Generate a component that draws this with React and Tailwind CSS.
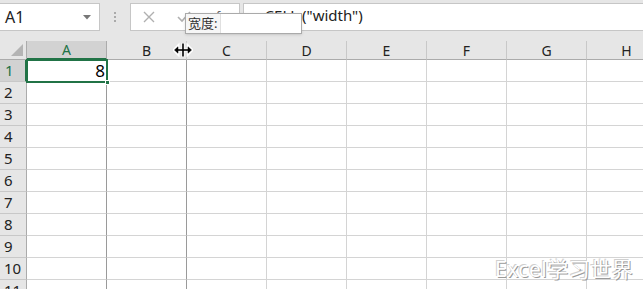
const cols = ["A", "B", "C", "D", "E", "F", "G", "H"];
const rows = [1, 2, 3, 4, 5, 6, 7, 8, 9, 10, 11];

const ResizeCursor = () => (
  <svg width="20" height="16" viewBox="0 0 20 16" className="absolute left-[173px] top-[42px]">
    <g stroke="#fff" strokeWidth="3" fill="#fff">
      <path d="M10 1 V15" />
      <path d="M2 8 H18" />
      <path d="M1 8 L5 4 V12 Z" />
      <path d="M19 8 L15 4 V12 Z" />
    </g>
    <g stroke="#000" strokeWidth="1.6" fill="#000">
      <path d="M10 1.5 V14.5" />
      <path d="M3 8 H17" />
      <path d="M1.5 8 L5 4.8 V11.2 Z" strokeWidth="0.5" />
      <path d="M18.5 8 L15 4.8 V11.2 Z" strokeWidth="0.5" />
    </g>
  </svg>
);

export default function App() {
  return (
    <div
      className="relative w-[643px] h-[289px] overflow-hidden bg-white"
      style={{ fontFamily: '"Noto Sans", "Noto Sans CJK SC", sans-serif' }}
    >
      {/* formula bar */}
      <div className="flex items-start h-[41px] bg-[#e6e6e6] pt-[3px]">
        <div className="flex items-center justify-between w-[100px] h-[28px] bg-white border border-[#c6c6c6] border-l-0 pl-[5px] pr-[8px]">
          <span className="text-[16px] text-[#222]">A1</span>
          <svg width="8" height="5" viewBox="0 0 8 5">
            <path d="M0 0 H8 L4 4.5 Z" fill="#777" />
          </svg>
        </div>
        <div className="w-[30px] h-[28px] flex flex-col items-center justify-center gap-[2px]">
          <span className="w-[2px] h-[2px] bg-[#aaa]" />
          <span className="w-[2px] h-[2px] bg-[#aaa]" />
          <span className="w-[2px] h-[2px] bg-[#aaa]" />
        </div>
        <div className="relative w-[110px] h-[28px] bg-white border border-[#c6c6c6] flex items-center pl-[12px] gap-[22px]">
          <svg width="12" height="12" viewBox="0 0 12 12">
            <path d="M1 1 L11 11 M11 1 L1 11" stroke="#b0b0b0" strokeWidth="1.4" />
          </svg>
          <svg width="14" height="12" viewBox="0 0 14 12">
            <path d="M1 6 L5 10 L13 1" stroke="#b0b0b0" strokeWidth="1.6" fill="none" />
          </svg>
          <span className="text-[13px] italic text-[#666] ml-[2px]">f</span>
        </div>
        <div className="flex-1 h-[28px] ml-[3px] bg-white border border-[#c6c6c6] border-r-0 flex items-center pl-[12px]">
          <span className="text-[15px] text-[#222] -mt-[4px]">=CELL ("width")</span>
        </div>
      </div>

      {/* sheet grid */}
      <div className="grid grid-cols-[27px_repeat(8,80px)] grid-rows-[19px_repeat(11,22px)]">
        <div className="bg-[#e6e6e6] border-b border-r border-[#ababab] flex items-end justify-end pr-[3px] pb-[3px]">
          <svg width="12" height="12" viewBox="0 0 12 12">
            <path d="M12 0 V12 H0 Z" fill="#b4b4b4" />
          </svg>
        </div>
        {cols.map((c) => (
          <div
            key={c}
            className={
              c === "A"
                ? "bg-[#d2d2d2] border-b-2 border-b-[#217346] border-r border-r-[#ababab] flex items-center justify-center text-[14px] text-[#217346]"
                : "bg-[#e6e6e6] border-b border-b-[#ababab] border-r border-r-[#c8c8c8] flex items-center justify-center text-[14px] text-[#222]"
            }
          >
            {c}
          </div>
        ))}
        {rows.map((r) => (
          <div key={r} className="contents">
            <div
              className={
                r === 1
                  ? "bg-[#d2d2d2] border-r-2 border-r-[#217346] border-b border-b-[#c8c8c8] flex items-center pl-[5px] text-[15px] text-[#217346]"
                  : "bg-[#e6e6e6] border-r border-r-[#ababab] border-b border-b-[#c8c8c8] flex items-center pl-[4px] text-[15px] text-[#222]"
              }
            >
              {r}
            </div>
            {cols.map((c) => (
              <div
                key={c}
                className={
                  c === "A" || c === "B"
                    ? "border-r border-r-[#9a9a9a] border-b border-b-[#d4d4d4]"
                    : "border-r border-r-[#d4d4d4] border-b border-b-[#d4d4d4]"
                }
              />
            ))}
          </div>
        ))}
      </div>

      {/* selected cell A1 */}
      <div className="absolute left-[26px] top-[59px] w-[82px] h-[24px] border-2 border-[#217346] flex items-center justify-end pr-[1px] text-[17px] text-black">
        8
        <span className="absolute -right-[4px] -bottom-[4px] w-[5px] h-[5px] bg-[#217346] border border-white" />
      </div>

      {/* tooltip */}
      <div className="absolute left-[185px] top-[13px] w-[117px] h-[21px] bg-white border border-[#aaa] shadow-sm flex items-center">
        <span className="text-[13px] text-[#333] pl-[2px] pr-[3px] bg-[#f6f6f6] h-full flex items-center border-r border-[#e0e0e0]">宽度:</span>
      </div>

      <ResizeCursor />

      {/* watermark */}
      <div
        className="absolute left-[495px] top-[254px] text-[21px] text-white tracking-[0.5px]"
        style={{ textShadow: "1px 1px 0 #9a9a9a, -1px -1px 0 #d0d0d0" }}
      >
        Excel学习世界
      </div>
    </div>
  );
}
